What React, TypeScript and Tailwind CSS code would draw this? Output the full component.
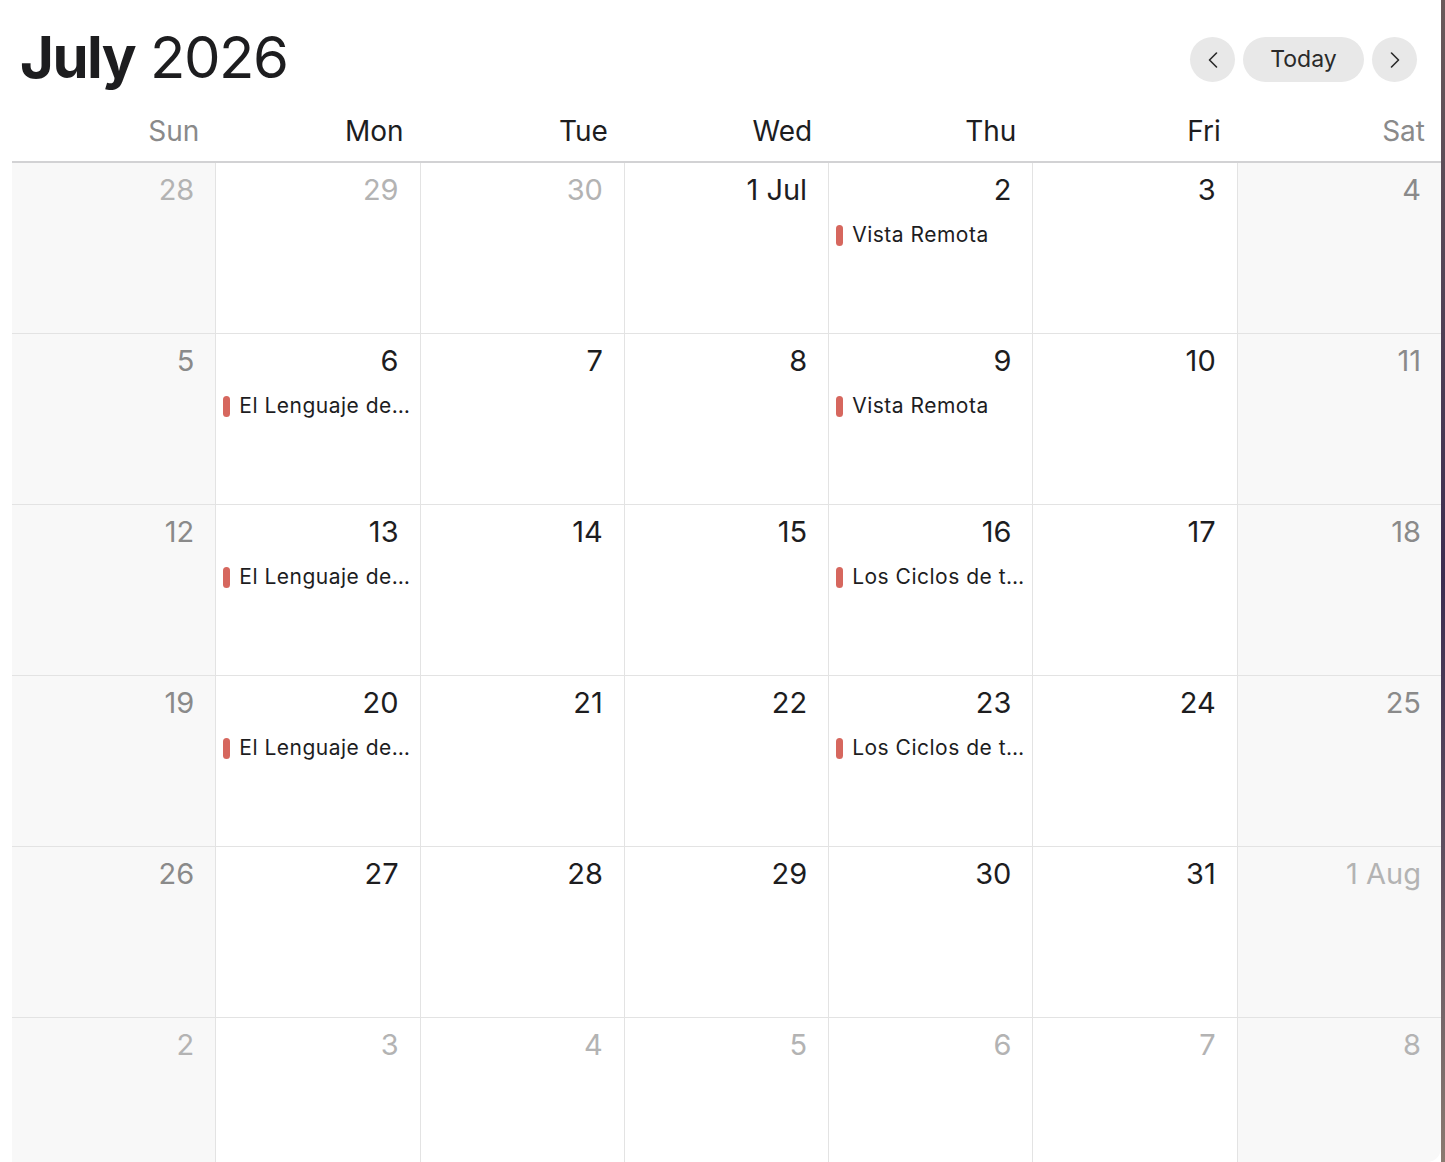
import { ChevronLeft, ChevronRight } from 'lucide-react';

type Day = {
  label: string;
  muted?: boolean;
  event?: string;
};

const weekdays = ['Sun', 'Mon', 'Tue', 'Wed', 'Thu', 'Fri', 'Sat'];

const lenguaje = 'El Lenguaje de…';
const vista = 'Vista Remota';
const ciclos = 'Los Ciclos de t…';

const weeks: Day[][] = [
  [
    { label: '28', muted: true },
    { label: '29', muted: true },
    { label: '30', muted: true },
    { label: '1 Jul' },
    { label: '2', event: vista },
    { label: '3' },
    { label: '4' },
  ],
  [
    { label: '5' },
    { label: '6', event: lenguaje },
    { label: '7' },
    { label: '8' },
    { label: '9', event: vista },
    { label: '10' },
    { label: '11' },
  ],
  [
    { label: '12' },
    { label: '13', event: lenguaje },
    { label: '14' },
    { label: '15' },
    { label: '16', event: ciclos },
    { label: '17' },
    { label: '18' },
  ],
  [
    { label: '19' },
    { label: '20', event: lenguaje },
    { label: '21' },
    { label: '22' },
    { label: '23', event: ciclos },
    { label: '24' },
    { label: '25' },
  ],
  [
    { label: '26' },
    { label: '27' },
    { label: '28' },
    { label: '29' },
    { label: '30' },
    { label: '31' },
    { label: '1 Aug', muted: true },
  ],
  [
    { label: '2', muted: true },
    { label: '3', muted: true },
    { label: '4', muted: true },
    { label: '5', muted: true },
    { label: '6', muted: true },
    { label: '7', muted: true },
    { label: '8', muted: true },
  ],
];

function DayCell({ day, col }: { day: Day; col: number }) {
  const weekend = col === 0 || col === 6;
  const numberColor = day.muted
    ? 'text-[#b3b3b3]'
    : weekend
      ? 'text-[#8a8a8a]'
      : 'text-[#1d1d1f]';

  return (
    <div
      className={`h-[171px] border-b border-[#e3e3e3] ${col < 6 ? 'border-r' : ''} ${
        weekend ? 'bg-[#f8f8f8]' : 'bg-white'
      }`}
    >
      <div className={`pr-[21px] pt-[9px] text-right text-[29px] leading-[36px] ${numberColor}`}>
        {day.label}
      </div>
      {day.event && (
        <div className="mt-[14px] flex items-center gap-[9px] pl-[7px]">
          <span className="h-[21px] w-[7px] rounded-full bg-[#d6675e]" />
          <span className="text-[21px] leading-[26px] tracking-[0.5px] text-[#1d1d1f]">{day.event}</span>
        </div>
      )}
    </div>
  );
}

export default function App() {
  return (
    <div
      className="flex h-[1162px] w-[1445px] overflow-hidden bg-white"
      style={{ fontFamily: 'Inter, "Noto Sans", sans-serif' }}
    >
      <div className="flex w-[1441px] flex-col overflow-hidden rounded-br-[14px] bg-white">
        <header className="flex h-[100px] items-start justify-between pl-[20px] pr-[24px]">
          <h1 className="pt-[22px] text-[58px] leading-[70px] tracking-[-1.5px] text-[#1d1d1f]">
            <span className="font-bold">July</span> <span className="font-normal">2026</span>
          </h1>
          <div className="mt-[37px] flex items-center gap-[8px]">
            <button className="flex h-[45px] w-[45px] items-center justify-center rounded-full bg-[#e8e8e8] text-[#2a2a2a]">
              <ChevronLeft size={28} strokeWidth={1.4} />
            </button>
            <button className="h-[45px] w-[121px] rounded-full bg-[#e8e8e8] text-[23px] text-[#2a2a2a]">
              Today
            </button>
            <button className="flex h-[45px] w-[45px] items-center justify-center rounded-full bg-[#e8e8e8] text-[#2a2a2a]">
              <ChevronRight size={28} strokeWidth={1.4} />
            </button>
          </div>
        </header>

        <div className="ml-[12px] w-[1430px]">
          <div className="grid h-[71px] grid-cols-7 border-b-2 border-[#d2d2d4]">
            {weekdays.map((name, i) => (
              <div
                key={name}
                className={`pr-[17px] pt-[21px] text-right text-[28px] leading-[36px] ${
                  i === 0 || i === 6 ? 'text-[#8a8a8a]' : 'text-[#1d1d1f]'
                }`}
              >
                {name}
              </div>
            ))}
          </div>

          <div className="grid grid-cols-7">
            {weeks.map((week, w) =>
              week.map((day, c) => <DayCell key={`${w}-${c}`} day={day} col={c} />),
            )}
          </div>
        </div>
      </div>
      <div className="w-[4px] bg-gradient-to-b from-[#6a5a5a] via-[#3c2c50] to-[#8a7a70]" />
    </div>
  );
}
